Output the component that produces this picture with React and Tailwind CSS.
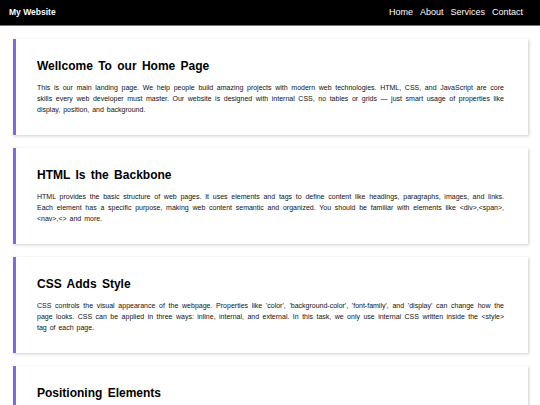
import React from "react";

const sections = [
  {
    title: "Wellcome To our Home Page",
    body: "This is our main landing page. We help people build amazing projects with modern web technologies. HTML, CSS, and JavaScript are core skills every web developer must master. Our website is designed with internal CSS, no tables or grids — just smart usage of properties like display, position, and background.",
  },
  {
    title: "HTML Is the Backbone",
    body: "HTML provides the basic structure of web pages. It uses elements and tags to define content like headings, paragraphs, images, and links. Each element has a specific purpose, making web content semantic and organized. You should be familiar with elements like <div>,<span>, <nav>,<> and more.",
  },
  {
    title: "CSS Adds Style",
    body: "CSS controls the visual appearance of the webpage. Properties like 'color', 'background-color', 'font-family', and 'display' can change how the page looks. CSS can be applied in three ways: inline, internal, and external. In this task, we only use internal CSS written inside the <style> tag of each page.",
  },
  {
    title: "Positioning Elements",
    body: "The position property lets you place elements exactly where you want them. Static, relative, absolute, fixed and sticky each behave differently, and combining them with top, left, right and bottom gives full control over the layout.",
  },
];

const links = ["Home", "About", "Services", "Contact"];

export default function App() {
  return (
    <div className="min-h-screen bg-white font-['Liberation_Sans',Arial,sans-serif] text-black">
      <nav className="flex h-[26px] items-center justify-between border-b border-[#777] bg-black pl-[9px] pr-[17px] text-white">
        <span className="text-[8.5px] font-bold">My Website</span>
        <ul className="flex gap-[7px] text-[9px]">
          {links.map((l) => (
            <li key={l}>{l}</li>
          ))}
        </ul>
      </nav>

      <main className="flex flex-col gap-[13px] pl-[13px] pr-[12px] pt-[13px] pb-[20px]">
        {sections.map((s) => (
          <section
            key={s.title}
            className="border-l-[3px] border-[#7b6be8] bg-white pl-[21px] pr-[24px] pt-[19px] pb-[20px] shadow-[1px_1px_3px_rgba(0,0,0,0.2)]"
          >
            <h2 className="text-[12px] font-bold leading-[16px] [word-spacing:2px]">{s.title}</h2>
            <p className="mt-[8px] text-justify text-[7px] leading-[11px] text-[#111] [word-spacing:1px]">
              {s.body}
            </p>
          </section>
        ))}
      </main>
    </div>
  );
}
